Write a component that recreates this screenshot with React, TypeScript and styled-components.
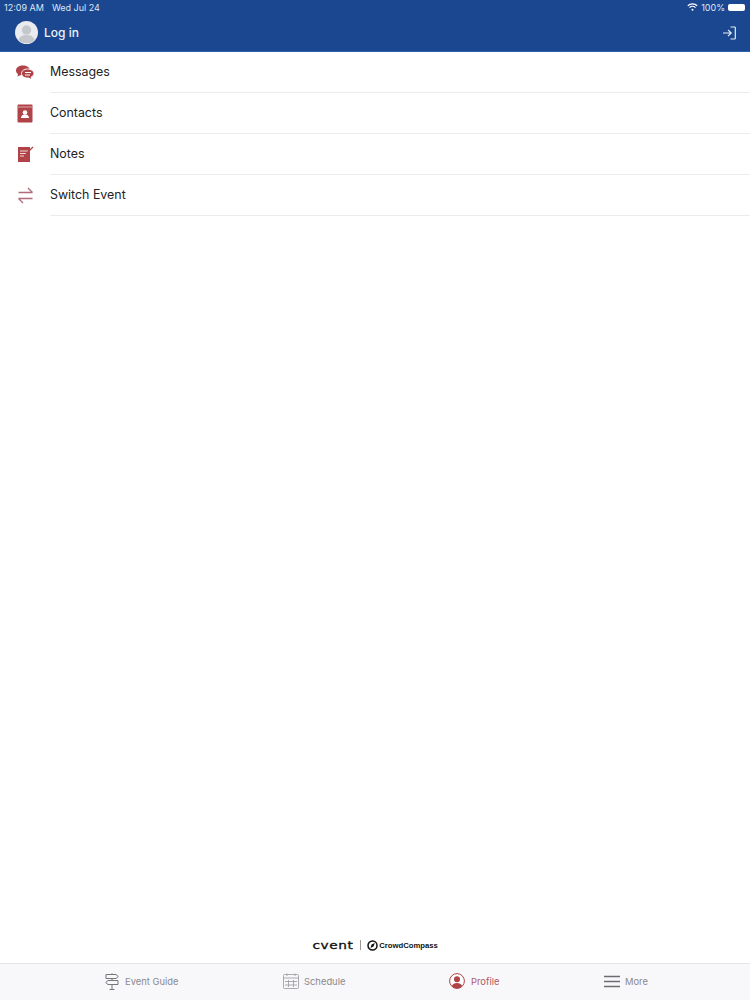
import React from "react";
import styled, { createGlobalStyle } from "styled-components";

const GlobalStyle = createGlobalStyle`
  html, body {
    margin: 0;
    padding: 0;
    background: #fff;
    font-family: "Inter", "Liberation Sans", sans-serif;
  }
`;

const Page = styled.div`
  display: flex;
  flex-direction: column;
  height: 1000px;
  width: 750px;
  overflow: hidden;
`;
const Header = styled.header`
  background: #1a4790;
  color: #fff;
  height: 52px;
  flex: none;
  box-sizing: border-box;
  border-bottom: 1px solid #2f62ab;
`;
const StatusBar = styled.div`
  align-items: center;
  display: flex;
  font-size: 9px;
  height: 14px;
  justify-content: space-between;
  padding: 0 5px 0 4px;
  color: #dfe7f3;
`;
const StatusGroup = styled.div<{ $gap: number }>`
  align-items: center;
  display: flex;
  gap: ${({ $gap }) => $gap}px;
`;
const Battery = styled.span`
  background: #fff;
  border-radius: 2px;
  display: block;
  height: 7px;
  width: 17px;
`;
const LoginRow = styled.div`
  align-items: center;
  display: flex;
  height: 37px;
  justify-content: space-between;
  padding: 0 14px 0 15px;
`;
const LoginLabel = styled.span`
  font-size: 12px;
  font-weight: 500;
  color: #eef2f8;
`;
const Menu = styled.nav`
  display: flex;
  flex-direction: column;
  flex: 1;
`;
const Row = styled.div`
  align-items: stretch;
  display: flex;
  height: 41px;
`;
const RowIcon = styled.div`
  align-items: center;
  display: flex;
  flex: none;
  justify-content: center;
  padding-bottom: 1px;
  box-sizing: border-box;
  width: 50px;
`;
const RowLabel = styled.div`
  align-items: center;
  border-bottom: 1px solid #ececec;
  color: #222;
  display: flex;
  flex: 1;
  font-size: 12.4px;
  padding-bottom: 1px;
`;
const Brands = styled.div`
  align-items: center;
  display: flex;
  flex: none;
  height: 33px;
  justify-content: center;
  padding: 0 0 3px 0;
  box-sizing: border-box;
`;
const Cvent = styled.span`
  color: #111;
  font-family: "DejaVu Sans", sans-serif;
  font-size: 10.5px;
  font-weight: 400;
  -webkit-text-stroke: 0.3px #111;
  letter-spacing: 0.5px;
  transform: scaleX(1.3);
  width: 42px;
  text-align: center;
`;
const Divider = styled.span`
  background: #999;
  height: 10px;
  margin: 0 6px 0 6px;
  width: 1px;
`;
const Crowd = styled.span`
  color: #111;
  font-family: "Liberation Sans", sans-serif;
  font-size: 7.7px;
  font-weight: 700;
  margin-left: 1px;
`;
const TabBar = styled.footer`
  background: #f8f7fa;
  border-top: 1px solid #e6e6e8;
  box-sizing: border-box;
  display: flex;
  flex: none;
  height: 37px;
  padding-left: 105px;
`;
const Tab = styled.div<{ $active?: boolean; $width: number; $gap: number }>`
  align-items: center;
  color: ${({ $active }) => ($active ? "#b05a66" : "#8a8a8e")};
  display: flex;
  font-size: 9.4px;
  gap: ${({ $gap }) => $gap}px;
  padding-bottom: 2px;
  box-sizing: border-box;
  width: ${({ $width }) => $width}px;
`;

const red = "#b04347";

const MessagesIcon = () => (
  <svg width="20" height="17" viewBox="0 0 20 16">
    <path d="M8 1C4 1 1 3 1 6c0 1.700 1 3 2 3.800L2.500 12 6 10.500c.6.100 1.200.2 2 .2C12 10.700 15 8.700 15 6S12 1 8 1z" fill={red} />
    <path d="M12.500 4.500c-3.300 0-6 1.900-6 4.500s2.700 4.500 6 4.500l1 0 3.500 1.800-.8-2.800c1.700-.8 2.800-2 2.800-3.500 0-2.600-3-4.500-6.500-4.500z" fill={red} stroke="#fff" strokeWidth="1" />
    <path d="M10 8h6M10 10.500h5" stroke="#fff" strokeWidth="1" />
  </svg>
);
const ContactsIcon = () => (
  <svg width="16" height="19" viewBox="0 0 16 19">
    <rect x="0.500" y="0.500" width="15" height="18" rx="1" fill={red} />
    <rect x="0.500" y="2.500" width="15" height="1" fill="#dba5a5" />
    <circle cx="8" cy="8.500" r="2.300" fill="#fff" />
    <path d="M4 14c0-2.500 1.800-3.500 4-3.500s4 1 4 3.500z" fill="#fff" />
  </svg>
);
const NotesIcon = () => (
  <svg width="17" height="16" viewBox="0 0 17 16">
    <rect x="1" y="1" width="12" height="15" fill={red} />
    <path d="M3 5h8M3 7.500h6M3 10h4" stroke="#f4d9d9" strokeWidth="1.100" />
    <path d="M9 8l7-7" stroke={red} strokeWidth="1.200" />
  </svg>
);
const SwitchIcon = () => (
  <svg width="17" height="17" viewBox="0 0 17 17" fill="none" stroke="#b06c78" strokeWidth="1.300">
    <path d="M1.500 5.500h14M11 1l4.500 4.500M15.500 11.500H1.500M6 16l-4.500-4.500" />
  </svg>
);
const AvatarIcon = () => (
  <svg width="23" height="23" viewBox="0 0 23 23">
    <circle cx="11.500" cy="11.500" r="11.500" fill="#e9ebef" />
    <circle cx="11.500" cy="9" r="4.700" fill="#c4c7cc" />
    <path d="M3.500 19c1-4 4.500-5 8-5s7 1 8 5a11.500 11.500 0 0 1-16 0z" fill="#c4c7cc" />
  </svg>
);
const LoginIcon = () => (
  <svg width="14" height="14" viewBox="0 0 14 14" fill="none" stroke="#e8eef7" strokeWidth="1.200">
    <path d="M8.500 1H12.500a.8.8 0 0 1 .8.8v10.400a.8.8 0 0 1-.8.8H8.500M1 7h8M6 3.800 9.200 7 6 10.200" />
  </svg>
);
const WifiIcon = () => (
  <svg width="11" height="8" viewBox="0 0 11 8" fill="none" stroke="#fff" strokeWidth="1.200">
    <path d="M.8 2.800a6.800 6.800 0 0 1 9.400 0M2.500 4.600a4.300 4.300 0 0 1 6 0" />
    <circle cx="5.500" cy="6.800" r="1" fill="#fff" stroke="none" />
  </svg>
);
const CompassLogo = () => (
  <svg width="11" height="11" viewBox="0 0 11 11" fill="none">
    <circle cx="5.500" cy="5.500" r="4.500" stroke="#111" strokeWidth="1.500" />
    <path d="M3.500 8 4.500 4.500 7.800 3 6.500 6.500z" fill="#111" />
  </svg>
);
const SignpostIcon = () => (
  <svg width="14" height="17" viewBox="0 0 14 17" fill="none" stroke="#77777b" strokeWidth="1">
    <path d="M1 1.500h10L13.300 3.500 11 5.500H1zM13 7.500H3L.7 9.500 3 11.500h10zM7 .3v1.200M7 5.500v2M7 11.500v5M4.500 16.500h5" />
  </svg>
);
const CalendarIcon = () => (
  <svg width="16" height="16" viewBox="0 0 16 16" fill="none" stroke="#a2a2a6" strokeWidth="0.900">
    <rect x="0.500" y="1.500" width="15" height="14" rx="1" />
    <path d="M.5 5h15M4 .5v2.500M12 .5v2.500M5.500 7v7M10.500 7v7M2 8.500h12M2 12h12" />
  </svg>
);
const ProfileIcon = () => (
  <svg width="16" height="16" viewBox="0 0 16 16">
    <circle cx="8" cy="8" r="7.400" fill="#fff" stroke={red} strokeWidth="1" />
    <circle cx="8" cy="6.300" r="3" fill={red} />
    <path d="M2.800 13.200C3.500 10.800 5.500 10 8 10s4.500.8 5.200 3.200a7 7 0 0 1-10.400 0z" fill={red} />
  </svg>
);
const MoreIcon = () => (
  <svg width="16" height="13" viewBox="0 0 16 13" stroke="#6d6d71" strokeWidth="1.600">
    <path d="M0 1.500h16M0 6.500h16M0 11.500h16" />
  </svg>
);

const items = [
  { label: "Messages", icon: <MessagesIcon /> },
  { label: "Contacts", icon: <ContactsIcon /> },
  { label: "Notes", icon: <NotesIcon /> },
  { label: "Switch Event", icon: <SwitchIcon /> },
];

export default function App() {
  return (
    <Page>
      <GlobalStyle />
      <Header>
        <StatusBar>
          <StatusGroup $gap={8}>
            <span>12:09 AM</span>
            <span>Wed Jul 24</span>
          </StatusGroup>
          <StatusGroup $gap={3}>
            <WifiIcon />
            <span>100%</span>
            <Battery />
          </StatusGroup>
        </StatusBar>
        <LoginRow>
          <StatusGroup $gap={6}>
            <AvatarIcon />
            <LoginLabel>Log in</LoginLabel>
          </StatusGroup>
          <LoginIcon />
        </LoginRow>
      </Header>
      <Menu>
        {items.map((item) => (
          <Row key={item.label}>
            <RowIcon>{item.icon}</RowIcon>
            <RowLabel>{item.label}</RowLabel>
          </Row>
        ))}
      </Menu>
      <Brands>
        <Cvent>cvent</Cvent>
        <Divider />
        <CompassLogo />
        <Crowd>CrowdCompass</Crowd>
      </Brands>
      <TabBar>
        <Tab $width={178} $gap={6}>
          <SignpostIcon />
          Event Guide
        </Tab>
        <Tab $width={166} $gap={5}>
          <CalendarIcon />
          Schedule
        </Tab>
        <Tab $active $width={155} $gap={6}>
          <ProfileIcon />
          Profile
        </Tab>
        <Tab $width={60} $gap={5}>
          <MoreIcon />
          More
        </Tab>
      </TabBar>
    </Page>
  );
}
